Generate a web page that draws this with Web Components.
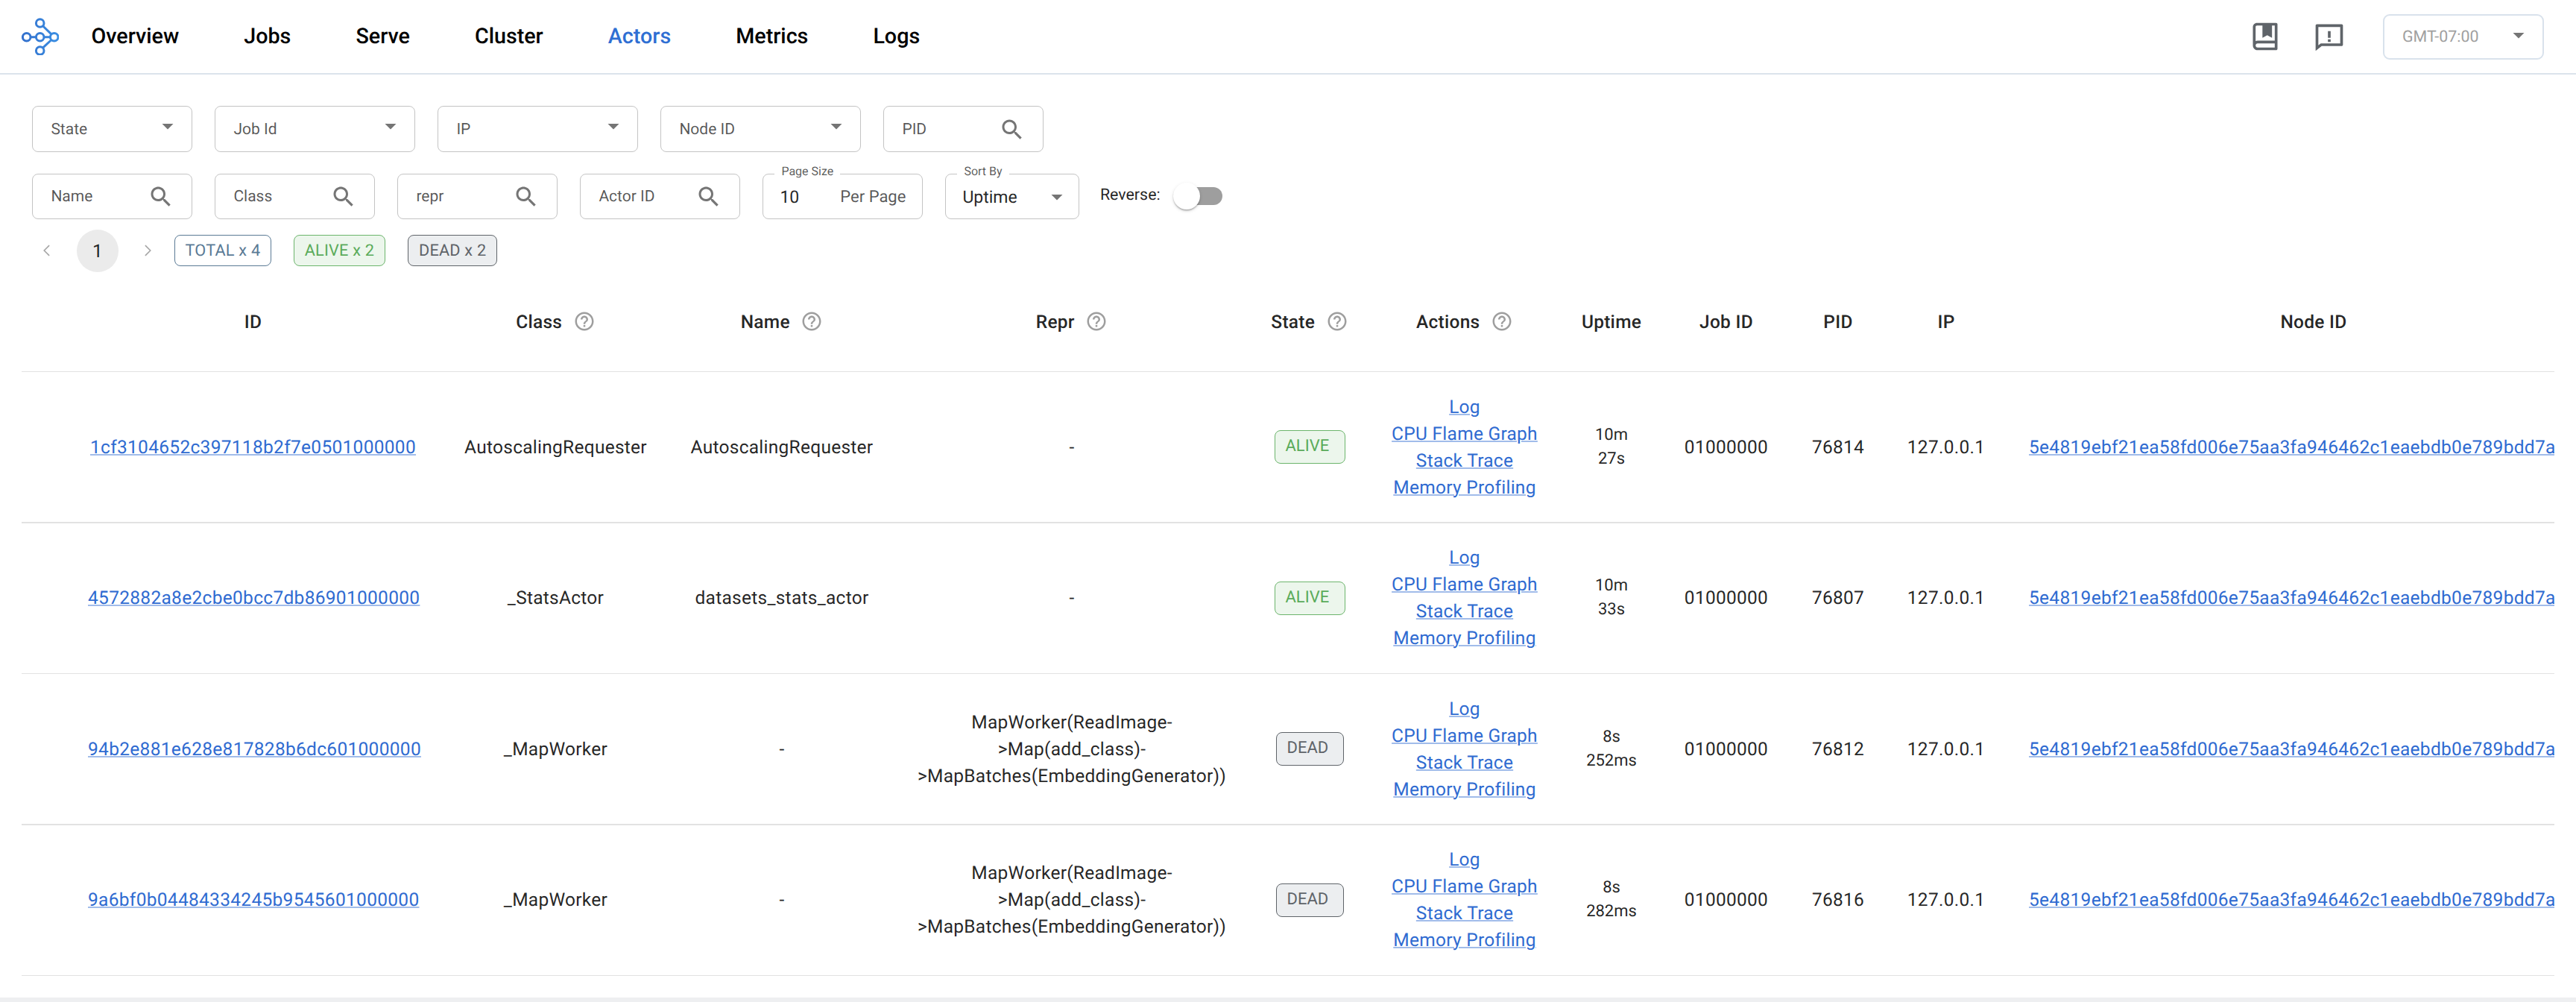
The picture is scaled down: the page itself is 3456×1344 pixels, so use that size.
<!DOCTYPE html>
<html>
<head>
<meta charset="utf-8">
<title>Actors</title>
<style>
  html, body { margin: 0; height: 100%; background: #fff; }
  body { font-family: Roboto, "Liberation Sans", sans-serif; color: rgba(0,0,0,.87); overflow: hidden; text-rendering: geometricPrecision; }
</style>
</head>
<body>
<ray-page>
  <nav-bar slot="nav"></nav-bar>
  <filter-panel slot="filters">
    <div-row slot="first">
      <filter-select label="State" width="215"></filter-select>
      <filter-select label="Job Id" width="269"></filter-select>
      <filter-select label="IP" width="269"></filter-select>
      <filter-select label="Node ID" width="269"></filter-select>
      <filter-search label="PID" height="62"></filter-search>
    </div-row>
    <div-row slot="second">
      <filter-search label="Name"></filter-search>
      <filter-search label="Class"></filter-search>
      <filter-search label="repr"></filter-search>
      <filter-search label="Actor ID"></filter-search>
      <page-size-field></page-size-field>
      <sort-field></sort-field>
      <reverse-switch></reverse-switch>
    </div-row>
    <page-summary slot="summary"></page-summary>
  </filter-panel>
  <actor-table slot="table">
    <actor-row actor="1cf3104652c397118b2f7e0501000000" cls="AutoscalingRequester" name="AutoscalingRequester" repr="-" state="ALIVE" uptime="10m 27s" pid="76814"></actor-row>
    <actor-row actor="4572882a8e2cbe0bcc7db86901000000" cls="_StatsActor" name="datasets_stats_actor" repr="-" state="ALIVE" uptime="10m 33s" pid="76807"></actor-row>
    <actor-row actor="94b2e881e628e817828b6dc601000000" cls="_MapWorker" name="-" repr="MapWorker(ReadImage->Map(add_class)->MapBatches(EmbeddingGenerator))" state="DEAD" uptime="8s 252ms" pid="76812"></actor-row>
    <actor-row actor="9a6bf0b04484334245b9545601000000" cls="_MapWorker" name="-" repr="MapWorker(ReadImage->Map(add_class)->MapBatches(EmbeddingGenerator))" state="DEAD" uptime="8s 282ms" pid="76816"></actor-row>
  </actor-table>
</ray-page>

<script>
const ICONS = {
  search: "M15.5 14h-.79l-.28-.27C15.41 12.59 16 11.11 16 9.5 16 5.91 13.09 3 9.5 3S3 5.91 3 9.5 5.91 16 9.5 16c1.61 0 3.09-.59 4.23-1.57l.27.28v.79l5 4.99L20.49 19l-4.99-5zm-6 0C7.01 14 5 11.99 5 9.5S7.01 5 9.5 5 14 7.01 14 9.5 11.99 14 9.5 14z",
  caret: "M7 10l5 5 5-5z",
  help: "M11 18h2v-2h-2v2zm1-16C6.48 2 2 6.48 2 12s4.48 10 10 10 10-4.48 10-10S17.52 2 12 2zm0 18c-4.41 0-8-3.59-8-8s3.59-8 8-8 8 3.59 8 8-3.59 8-8 8zm0-14c-2.21 0-4 1.79-4 4h2c0-1.1.9-2 2-2s2 .9 2 2c0 2-3 1.75-3 5h2c0-2.25 3-2.5 3-5 0-2.21-1.79-4-4-4z",
  book: "M20 22H6.5C4.567 22 3 20.433 3 18.5V5C3 3.34315 4.34315 2 6 2H20C20.5523 2 21 2.44772 21 3V21C21 21.5523 20.5523 22 20 22ZM19 20V17H6.5C5.67157 17 5 17.6716 5 18.5C5 19.3284 5.67157 20 6.5 20H19ZM10 4H6C5.44772 4 5 4.44772 5 5V15.3368C5.45463 15.1208 5.96321 15 6.5 15H19V4H17V13L13.5 11L10 13V4Z",
  feedback: "M6.45455 19L2 22.5V4C2 3.44772 2.44772 3 3 3H21C21.5523 3 22 3.44772 22 4V18C22 18.5523 21.5523 19 21 19H6.45455ZM5.76282 17H20V5H4V18.3851L5.76282 17ZM11 14H13V16H11V14ZM11 8H13V13H11V8Z"
};
const icon = (name, size, color) =>
  `<svg width="${size}" height="${size}" viewBox="0 0 24 24" fill="${color}" style="display:block;flex:none"><path d="${ICONS[name]}"/></svg>`;
const chevron = d =>
  `<svg width="30" height="30" viewBox="0 0 24 24" fill="none" stroke="#a6a6a6" stroke-width="1.3" style="display:block;flex:none"><path d="${d}"/></svg>`;

// small helper, every element below is just a shadow root plus some html
class Base extends HTMLElement {
  constructor() {
    super();
    this.attachShadow({mode: "open"});
  }
  connectedCallback() {
    this.shadowRoot.innerHTML = this.render();
  }
}

class RayPage extends Base {
  render() {
    return `<style>
      :host { display: flex; flex-direction: column; height: 1344px; }
      .grow { flex: 1; }
      .band { height: 6.3px; background: #eeeff1; }
    </style>
    <slot name="nav"></slot>
    <slot name="filters"></slot>
    <slot name="table"></slot>
    <div class="grow"></div>
    <div class="band"></div>`;
  }
}

class NavBar extends Base {
  render() {
    const items = ["Overview", "Jobs", "Serve", "Cluster", "Actors", "Metrics", "Logs"];
    return `<style>
      :host { display: flex; align-items: center; box-sizing: border-box; height: 100px; padding: 0 43px 0 29px; border-bottom: 2px solid #dbe3ec; }
      .logo { display: block; flex: none; margin-right: 43.5px; }
      nav { display: flex; gap: 87px; font-size: 28.7px; font-weight: 500; color: #000; }
      .on { color: #2f6fd3; }
      .right { margin-left: auto; display: flex; align-items: center; }
      .feedback { margin-left: 42px; margin-right: 50px; }
      .tz { box-sizing: border-box; width: 216px; height: 61px; border: 2px solid #d9e2ec; border-radius: 9px; display: flex; align-items: center; justify-content: space-between; padding: 0 14px 0 24px; font-size: 21.4px; color: #a0a0a0; }
      .tz svg { margin-top: -5px; }
    </style>
    <svg class="logo" width="50" height="50" viewBox="29 23 50 50" fill="none" stroke="url(#g)" stroke-width="3">
      <defs><linearGradient id="g" gradientUnits="userSpaceOnUse" x1="29" y1="48" x2="79" y2="48"><stop offset="0" stop-color="#3470cc"/><stop offset="1" stop-color="#3a8fe3"/></linearGradient></defs>
      <circle cx="35.7" cy="48.7" r="5.3"/><circle cx="53.7" cy="48.7" r="5.3"/><circle cx="72.7" cy="48.7" r="5.3"/>
      <circle cx="53.7" cy="30" r="5.3"/><circle cx="53.7" cy="67" r="5.3"/>
      <path d="M41 48.7h7.4M59 48.7h8.4M57.5 33.8l11.4 11.1M57.5 63.2l11.4-10.7"/>
    </svg>
    <nav>${items.map(i => `<span class="${i == "Actors" ? "on" : ""}">${i}</span>`).join("")}</nav>
    <div class="right">
      ${icon("book", 44, "#5f6469")}
      <div class="feedback">${icon("feedback", 44, "#5f6469")}</div>
      <div class="tz"><span>GMT-07:00</span>${icon("caret", 36, "#757575")}</div>
    </div>`;
  }
}

class FilterPanel extends Base {
  render() {
    return `<style>
      :host { display: flex; flex-direction: column; padding: 42px 0 0 43.4px; }
      ::slotted([slot=second]) { margin-top: 29px; }
      ::slotted([slot=summary]) { margin: 14px 0 0 -8px; }
    </style>
    <slot name="first"></slot>
    <slot name="second"></slot>
    <slot name="summary"></slot>`;
  }
}

class DivRow extends Base {
  render() {
    return `<style>:host { display: flex; align-items: center; gap: 30px; }</style><slot></slot>`;
  }
}

const BOX = `
  :host { display: block; flex: none; }
  .box { box-sizing: border-box; display: flex; align-items: center; justify-content: space-between; border: 1.75px solid #c4c4c4; border-radius: 8px; font-size: 21px; color: rgba(0,0,0,.66); padding-top: 2px !important; }
  .legend { position: absolute; left: 16px; top: -13.5px; padding: 0 9px; background: #fff; font-size: 16px; line-height: 20px; color: rgba(0,0,0,.66); }
`;

class FilterSelect extends Base {
  render() {
    return `<style>${BOX}
      .box { width: ${this.getAttribute("width")}px; height: 62px; padding: 0 14px 0 24px; }
      svg { margin-top: -9.5px; }
    </style>
    <div class="box"><span>${this.getAttribute("label")}</span>${icon("caret", 36, "#757575")}</div>`;
  }
}

class FilterSearch extends Base {
  render() {
    return `<style>${BOX}
      .box { width: 215px; height: ${this.getAttribute("height") || 60.5}px; padding: 0 23px 0 24px; }
    </style>
    <div class="box"><span>${this.getAttribute("label")}</span>${icon("search", 36, "#757575")}</div>`;
  }
}

class PageSizeField extends Base {
  render() {
    return `<style>${BOX}
      :host { position: relative; }
      .box { width: 215px; height: 60.5px; padding: 0 22px; font-size: 22px; }
      .val { color: rgba(0,0,0,.87); font-size: 23px; }
    </style>
    <div class="legend">Page Size</div>
    <div class="box"><span class="val">10</span><span>Per Page</span></div>`;
  }
}

class SortField extends Base {
  render() {
    return `<style>${BOX}
      :host { position: relative; }
      .box { width: 179.5px; height: 60.5px; padding: 0 11px 0 22px; font-size: 23px; color: rgba(0,0,0,.87); }
    </style>
    <div class="legend">Sort By</div>
    <div class="box"><span>Uptime</span>${icon("caret", 36, "#757575")}</div>`;
  }
}

class ReverseSwitch extends Base {
  render() {
    return `<style>
      :host { display: flex; align-items: center; gap: 17px; font-size: 21.4px; margin-left: -2px; }
      span { position: relative; top: -1.5px; }
      .sw { position: relative; width: 66.5px; height: 37px; }
      .track { position: absolute; left: 8px; right: 0; top: 6px; height: 24.5px; border-radius: 13px; background: #9e9e9e; }
      .thumb { position: absolute; left: 0; top: 0; width: 36.5px; height: 36.5px; border-radius: 50%; background: #fff; box-shadow: 0 2px 2px -1px rgba(0,0,0,.2), 0 1.75px 2px rgba(0,0,0,.14), 0 1.75px 5px rgba(0,0,0,.12); }
    </style>
    <span>Reverse:</span><div class="sw"><div class="track"></div><div class="thumb"></div></div>`;
  }
}

class PageSummary extends Base {
  render() {
    return `<style>
      :host { display: flex; align-items: center; }
      .item { width: 56px; height: 57px; display: flex; align-items: center; justify-content: center; border-radius: 50%; font-size: 24.5px; }
      .cur { background: #ebebeb; margin: 0 11.5px; }
      .chips { display: flex; gap: 30px; margin-left: 7.5px; }
      .chip { box-sizing: border-box; height: 42px; display: flex; align-items: center; justify-content: center; border-radius: 8px; font-size: 21.7px; letter-spacing: .01em; border: 1.75px solid; }
      .total { width: 130px; color: #5a7a95; border-color: #5a7a95; }
      .alive { width: 123px; color: #5aab5a; border-color: #6cb56c; background: #ecf6ec; }
      .dead { width: 120.5px; color: #5f6469; border-color: #5f6469; background: #eceef0; }
    </style>
    <div class="item">${chevron("M14.5 6.5L9 12l5.5 5.5")}</div>
    <div class="item cur">1</div>
    <div class="item">${chevron("M9.5 6.5L15 12l-5.5 5.5")}</div>
    <div class="chips">
      <div class="chip total">TOTAL x 4</div>
      <div class="chip alive">ALIVE x 2</div>
      <div class="chip dead">DEAD x 2</div>
    </div>`;
  }
}

const COLS = "59px 503px 309px 298px 480px 158px 258px 136px 172px 128px 162px 824px";

class ActorTable extends Base {
  render() {
    const heads = [["ID"], ["Class", 1], ["Name", 1], ["Repr", 1], ["State", 1], ["Actions", 1], ["Uptime"], ["Job ID"], ["PID"], ["IP"], ["Node ID"]];
    return `<style>
      :host { display: block; margin: 0 29px; overflow: hidden; --cols: ${COLS}; }
      .head { display: grid; grid-template-columns: var(--cols); width: 3487px; height: 133px; align-items: center; font-size: 24.5px; font-weight: 500; letter-spacing: .0107em; box-sizing: border-box; }
      .line { height: 1.75px; background: #e2e2e2; }
      .h { display: flex; align-items: center; justify-content: center; gap: 14.5px; }
    </style>
    <div class="head"><div></div>${heads.map(h => `<div class="h"><span>${h[0]}</span>${h[1] ? icon("help", 30, "#9e9e9e") : ""}</div>`).join("")}</div>
    <div class="line"></div>
    <slot></slot>`;
  }
}

class ActorRow extends Base {
  render() {
    const a = n => this.getAttribute(n);
    const actions = ["Log", "CPU Flame Graph", "Stack Trace", "Memory Profiling"];
    const repr = a("repr").replace(/>/g, "&gt;");
    return `<style>
      :host { display: block; }
      .row { display: grid; grid-template-columns: var(--cols); width: 3487px; height: 200.75px; align-items: center; text-align: center; font-size: 24.5px; line-height: 36px; letter-spacing: .0107em; }
      .line { height: 1.75px; background: #e2e2e2; }
      .c { padding: 0 30px; }
      a { color: #2f6bd1; text-decoration: underline; text-decoration-color: rgba(47,107,209,.45); text-decoration-thickness: 2px; white-space: nowrap; }
      .hash { letter-spacing: .3px; }
      .acts { padding: 0; display: flex; flex-direction: column; align-items: center; }
      .up { padding: 0; font-size: 22px; line-height: 32px; letter-spacing: 0; }
      .up span { display: block; }
      status-chip { justify-self: center; }
      .node { text-align: left; white-space: nowrap; }
    </style>
    <div class="row">
      <div></div>
      <div class="c"><a class="hash">${a("actor")}</a></div>
      <div>${a("cls")}</div>
      <div>${a("name")}</div>
      <div class="c">${repr}</div>
      <status-chip state="${a("state")}"></status-chip>
      <div class="acts">${actions.map(t => `<a>${t}</a>`).join("")}</div>
      <div class="up">${a("uptime").split(" ").map(t => `<span>${t}</span>`).join("")}</div>
      <div>01000000</div>
      <div>${a("pid")}</div>
      <div>127.0.0.1</div>
      <div class="c node"><a class="hash">5e4819ebf21ea58fd006e75aa3fa946462c1eaebdb0e789bdd7a</a></div>
    </div>
    <div class="line"></div>`;
  }
}

class StatusChip extends Base {
  render() {
    const alive = this.getAttribute("state") == "ALIVE";
    return `<style>
      :host { display: block; box-sizing: border-box; width: ${alive ? 95 : 91}px; height: 45px; padding-left: 14px; border-radius: 8px; border: 1.75px solid; font-size: 22px; line-height: 41px; letter-spacing: 0; text-align: left;
        color: ${alive ? "#5aab5a" : "#5f6469"}; border-color: ${alive ? "#6cb56c" : "#5f6469"}; background: ${alive ? "#ecf6ec" : "#eceef0"}; }
    </style>${this.getAttribute("state")}`;
  }
}

customElements.define("ray-page", RayPage);
customElements.define("nav-bar", NavBar);
customElements.define("filter-panel", FilterPanel);
customElements.define("div-row", DivRow);
customElements.define("filter-select", FilterSelect);
customElements.define("filter-search", FilterSearch);
customElements.define("page-size-field", PageSizeField);
customElements.define("sort-field", SortField);
customElements.define("reverse-switch", ReverseSwitch);
customElements.define("page-summary", PageSummary);
customElements.define("actor-table", ActorTable);
customElements.define("actor-row", ActorRow);
customElements.define("status-chip", StatusChip);
</script>
</body>
</html>
